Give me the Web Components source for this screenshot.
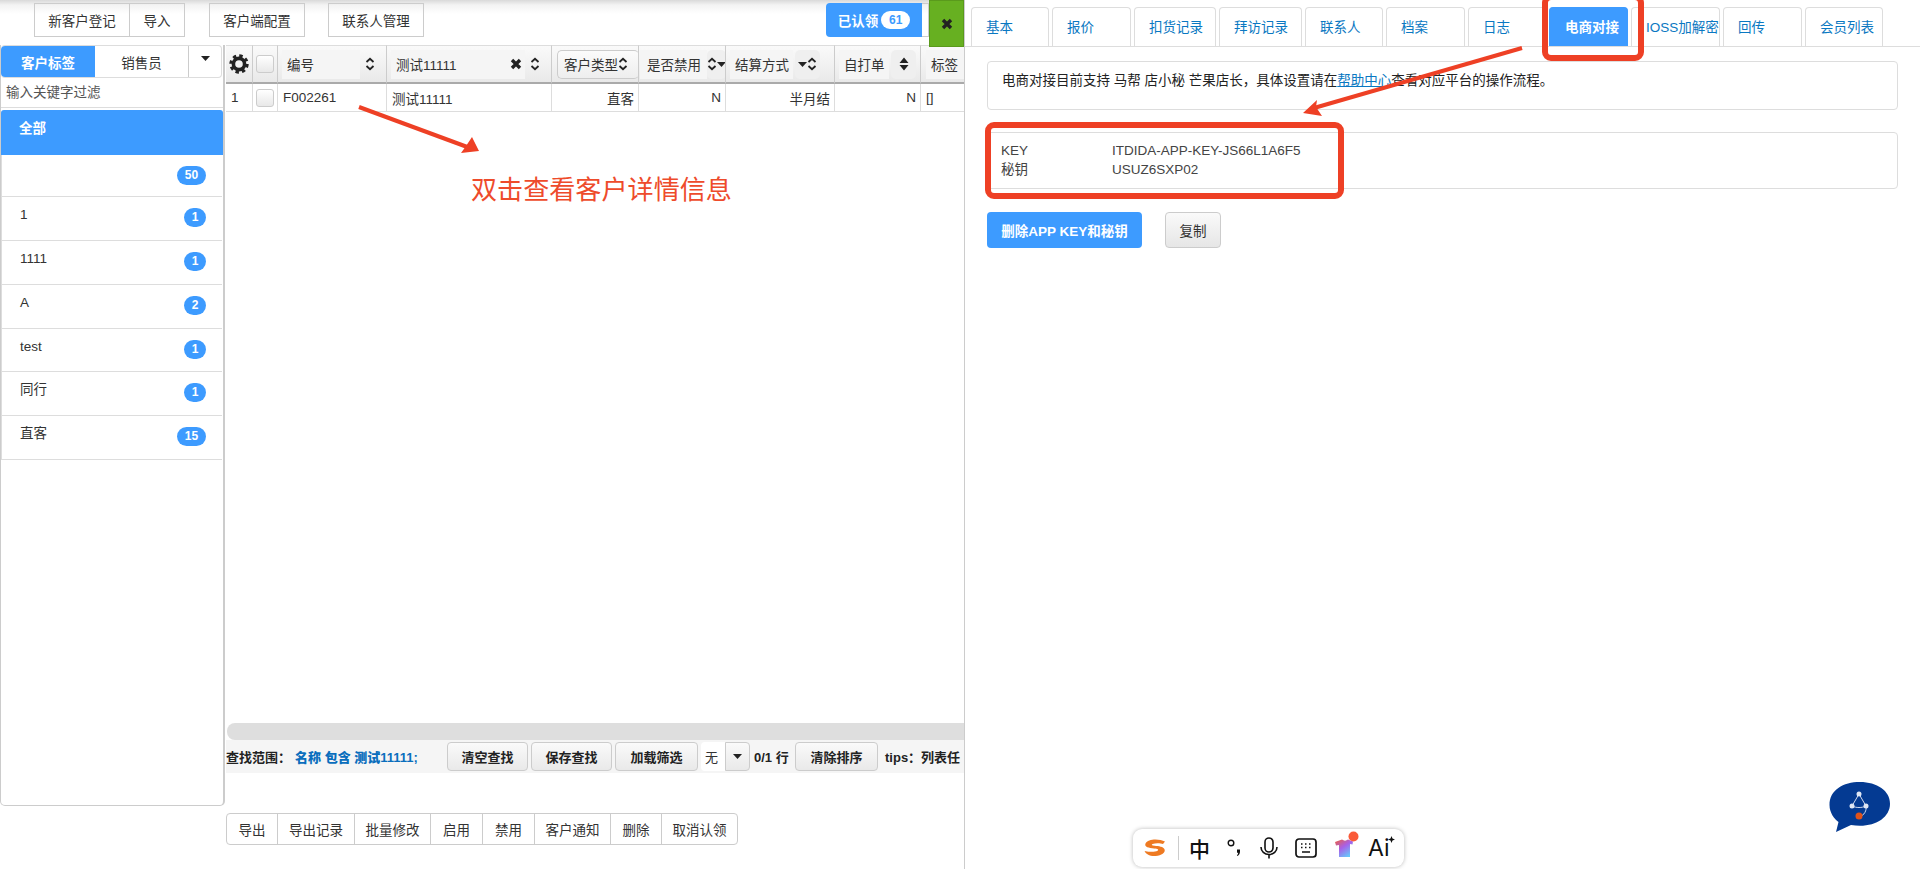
<!DOCTYPE html>
<html lang="zh-CN">
<head>
<meta charset="utf-8">
<title>客户管理</title>
<style>
  html, body { margin: 0; height: 869px; overflow: hidden; background: #fff; }
  body { font: 13.5px "Liberation Sans", "Noto Sans CJK SC", sans-serif; color: #333; }
</style>
</head>
<body>
<customer-page>
  <left-pane slot="left">
    <top-toolbar slot="top"></top-toolbar>
    <tag-sidebar slot="side"></tag-sidebar>
    <customer-grid slot="grid"></customer-grid>
    <grid-status slot="grid"></grid-status>
    <action-bar slot="grid"></action-bar>
  </left-pane>
  <detail-pane slot="right"></detail-pane>
</customer-page>
<note-layer></note-layer>
<ime-bar></ime-bar>
<chat-bubble></chat-bubble>

<script>
(function () {
  const sortIcon = `<svg width="10" height="14" viewBox="0 0 10 14"><path d="M1.5 5 5 1.8 8.5 5M1.5 9 5 12.2 8.5 9" fill="none" stroke="#222" stroke-width="1.8"/></svg>`;
  const sortSolid = `<svg width="10" height="14" viewBox="0 0 10 14"><path d="M5 .5 9.5 6h-9zM.5 8h9L5 13.5z" fill="#222"/></svg>`;
  const caret = `<svg width="9" height="5" viewBox="0 0 9 5"><path d="M0 0h9L4.5 5z" fill="#222"/></svg>`;
  const cross = `<svg width="12" height="12" viewBox="0 0 12 12"><path d="M2 2 10 10M10 2 2 10" stroke="#222" stroke-width="3.4"/></svg>`;

  function define(name, css, html) {
    customElements.define(name, class extends HTMLElement {
      constructor() {
        super();
        this.attachShadow({ mode: "open" }).innerHTML = `<style>${css}</style>${html}`;
      }
    });
  }

  define("customer-page", `
    :host { display: flex; height: 869px; }
  `, `<slot name="left"></slot><slot name="right"></slot>`);

  define("left-pane", `
    :host { display: grid; grid-template-columns: 226px 738px; grid-template-rows: 45px 1fr;
      width: 964px; flex: none; height: 869px; border-right: 1px solid #ccc; }
    .top { grid-column: 1 / 3; display: block; }
    .grid { display: flex; flex-direction: column; min-width: 0; }
  `, `<div class="top"><slot name="top"></slot></div><slot name="side"></slot><div class="grid"><slot name="grid"></slot></div>`);

  define("top-toolbar", `
    :host { display: flex; height: 45px; position: relative; box-sizing: border-box; padding: 3px 0 0 34px;
      background: linear-gradient(#d9d9d9, #f3f3f3 5px, #fff 14px); }
    .b { box-sizing: border-box; height: 34px; border: 1px solid #ccc; display: flex; align-items: center; justify-content: center; color: #333; }
    .w1 { width: 96px; } .w2 { width: 56px; margin-left: -1px; }
    .gap { margin-left: 24px; }
    .gap2 { margin-left: 23px; }
    .claimed { margin-left: 402px; width: 96px; height: 34px; box-sizing: border-box; background: #3d9bff; color: #fff; font-weight: bold;
      border-radius: 4px 0 0 4px; display: flex; align-items: center; justify-content: center; gap: 3px; }
    .claimed i { font-style: normal; background: #fff; color: #3d9bff; border-radius: 10px; width: 29px; height: 18px; line-height: 18px; text-align: center; font-size: 12px; }
    .stub { width: 7px; height: 34px; box-sizing: border-box; border: 1px solid #ccc; border-left: 0; }
    .close { width: 35px; height: 47px; margin-top: -3px; box-sizing: border-box; background: #67b021; border: 1px solid #5a9a1c; display: flex; align-items: center; justify-content: center; z-index: 1; }
  `, `<div class="b w1">新客户登记</div><div class="b w2">导入</div>
      <div class="b w1 gap">客户端配置</div><div class="b w1 gap2">联系人管理</div>
      <div class="claimed">已认领<i>61</i></div><div class="stub"></div>
      <div class="close">${cross}</div>`);

  const tags = [["", 50, 42], ["1", 1, 44], ["1111", 1, 44], ["A", 2, 44], ["test", 1, 43], ["同行", 1, 44], ["直客", 15, 44]];
  define("tag-sidebar", `
    :host { display: block; width: 225px; height: 761px; box-sizing: border-box; border: 1px solid #ccc; border-width: 0 2px 1px 1px; border-radius: 0 0 5px 5px; }
    .tabs { display: grid; grid-template-columns: 94px 94px 32px; height: 33px; box-sizing: border-box; border: 1px solid #ddd; border-left: 0; border-radius: 4px; width: 221px; }
    .tabs div { display: flex; align-items: center; justify-content: center; }
    .tabs .on { background: #3d9bff; color: #fff; font-weight: bold; border-radius: 4px 0 0 4px; }
    .tabs .mid { border-right: 1px solid #ccc; }
    .tabs .cr { padding-bottom: 6px; }
    .filter { height: 29px; line-height: 27px; padding-left: 5px; color: #555; border-bottom: 1px solid #ddd; box-sizing: border-box; margin-top: 1px; }
    .all { height: 45px; margin-top: 2px; background: #3d9bff; color: #fff; font-weight: bold; padding: 7px 0 0 18px; box-sizing: border-box; border-radius: 3px 3px 0 0; }
    .tag { display: flex; justify-content: space-between; box-sizing: border-box; padding: 8px 16px 0 18px; line-height: 19px; border-bottom: 1px solid #ddd; border-left: 1px solid #ddd; margin-right: 1px; color: #333; }
    .tag i { font: bold 12px "Liberation Sans", sans-serif; background: #3d9bff; color: #fff; border-radius: 10px; height: 19px; line-height: 19px; min-width: 22px; text-align: center; margin-top: 3px; }
    .tag i.w { min-width: 29px; }
  `, `<div class="tabs"><div class="on">客户标签</div><div class="mid">销售员</div><div class="cr">${caret}</div></div>
      <div class="filter">输入关键字过滤</div>
      <div class="all">全部</div>
      ${tags.map(t => `<div class="tag" style="height:${t[2]}px"><span>${t[0]}</span><i class="${t[1] > 9 ? "w" : ""}">${t[1]}</i></div>`).join("")}`);

  define("customer-grid", `
    :host { display: block; height: 678px; width: 738px; overflow: hidden; }
    .t { display: grid; grid-template-columns: 27px 25px 109px 165px 87px 87px 109px 86px 43px; }
    .h { height: 39px; box-sizing: border-box; background: linear-gradient(#fafafa, #e9e9e9); border-top: 1px solid #ddd; border-right: 1px solid #ccc; border-bottom: 2px solid #aaa;
      display: flex; align-items: center; white-space: nowrap; overflow: hidden; color: #333; }
    .lb { background: #f5f5f5; height: 29px; display: flex; align-items: center; box-sizing: border-box; padding-left: 5px; flex: none; justify-content: space-between; }
    .bt { height: 29px; box-sizing: border-box; background: #efefef; border-radius: 5px; display: flex; align-items: center; justify-content: center; flex: none; }
    .h svg { flex: none; }
    .c { height: 28px; box-sizing: border-box; border-right: 1px solid #ddd; border-bottom: 1px solid #ddd; display: flex; align-items: center; padding: 0 4px 0 5px; white-space: nowrap; }
    .n { justify-content: flex-end; }
    .ck { width: 18px; height: 18px; box-sizing: border-box; border: 1px solid #ccc; border-radius: 3px; background: linear-gradient(#fff, #e8e8e8); display: block; }
    .mid { justify-content: center; padding: 0; }
  `, `<div class="t">
      <div class="h mid"><svg width="20" height="20" viewBox="0 0 20 20"><circle cx="10" cy="10" r="5.6" fill="none" stroke="#222" stroke-width="3.6"/><circle cx="10" cy="10" r="8.2" fill="none" stroke="#222" stroke-width="3" stroke-dasharray="3.4 3.04"/></svg></div>
      <div class="h mid"><span class="ck"></span></div>
      <div class="h" style="padding-left:4px"><span class="lb" style="width:78px">编号</span><span style="margin-left:5px;display:flex">${sortIcon}</span></div>
      <div class="h" style="padding-left:4px"><span class="lb" style="width:134px"><span>测试11111</span><span style="display:flex;padding-right:3px">${cross}</span></span><span style="margin-left:5px;display:flex">${sortIcon}</span></div>
      <div class="h" style="padding-left:5px"><span class="bt" style="width:82px;border:1px solid #ccc;border-right:0;justify-content:flex-start;padding-left:6px;background:linear-gradient(#fbfbfb,#eee)">客户类型${sortIcon}</span></div>
      <div class="h" style="padding-left:1px"><span class="lb" style="width:67px;padding-left:7px">是否禁用</span><span class="bt" style="width:19px;justify-content:flex-start">${sortIcon}${caret}</span></div>
      <div class="h" style="padding-left:4px"><span class="lb" style="width:63px">结算方式</span><span class="bt" style="width:25px;margin-left:2px">${caret}${sortIcon}</span></div>
      <div class="h" style="padding-left:4px"><span class="lb" style="width:50px">自打单</span><span class="bt" style="width:25px;margin-left:2px">${sortSolid}</span></div>
      <div class="h" style="padding-left:5px;border-right:0"><span class="lb" style="width:38px">标签</span></div>

      <div class="c">1</div>
      <div class="c mid"><span class="ck"></span></div>
      <div class="c">F002261</div>
      <div class="c">测试11111</div>
      <div class="c n">直客</div>
      <div class="c n">N</div>
      <div class="c n">半月结</div>
      <div class="c n">N</div>
      <div class="c" style="border-right:0">[]</div>
    </div>`);

  define("grid-status", `
    :host { display: block; width: 738px; }
    .sb { height: 17px; background: #dedede; border-radius: 8px 0 0 8px; margin-left: 1px; }
    .bar { height: 33px; background: #f5f5f5; display: flex; align-items: center; white-space: nowrap; color: #222; font-weight: bold; font-size: 13px; }
    .scope b { color: #0a6ebd; margin-left: 4px; }
    .scope { width: 221px; flex: none; }
    .btn { box-sizing: border-box; width: 81px; height: 29px; flex: none; margin-right: 3px; background: linear-gradient(#fafafa, #e9e9e9); border: 1px solid #ccc; border-radius: 4px; display: flex; align-items: center; justify-content: center; }
    .btn.wide { width: 83px; }
    .sel { width: 49px; height: 29px; flex: none; display: flex; box-sizing: border-box; font-weight: normal; }
    .sel span { width: 24px; display: flex; align-items: center; padding-left: 4px; box-sizing: border-box; background: #fff; border-radius: 4px 0 0 4px; color: #333; }
    .sel i { width: 25px; background: linear-gradient(#fafafa, #e9e9e9); border: 1px solid #ccc; box-sizing: border-box; border-radius: 0 4px 4px 0; display: flex; align-items: center; justify-content: center; }
    .pg { width: 41px; margin-left: 4px; flex: none; }
  `, `<div class="sb"></div>
    <div class="bar"><span class="scope">查找范围：<b>名称 包含 测试11111;</b></span>
      <span class="btn">清空查找</span><span class="btn">保存查找</span><span class="btn wide">加载筛选</span>
      <span class="sel"><span>无</span><i>${caret}</i></span>
      <span class="pg">0/1 行</span><span class="btn wide">清除排序</span><span style="margin-left:4px">tips：列表任</span></div>`);

  define("action-bar", `
    :host { display: flex; width: 512px; height: 32px; margin-top: 40px; box-sizing: border-box; border: 1px solid #ccc; border-radius: 4px; }
    div { display: flex; align-items: center; justify-content: center; box-sizing: border-box; border-right: 1px solid #ccc; color: #333; }
    div:last-child { border-right: 0; }
  `, [["导出", 51], ["导出记录", 77], ["批量修改", 76], ["启用", 52], ["禁用", 52], ["客户通知", 76], ["删除", 51], ["取消认领", 75]]
      .map(b => `<div style="width:${b[1]}px">${b[0]}</div>`).join(""));

  const tabs = [["基本", 78], ["报价", 79], ["扣货记录", 82], ["拜访记录", 83], ["联系人", 78], ["档案", 79], ["日志", 78], ["电商对接", 79, 1], ["IOSS加解密", 89], ["回传", 79], ["会员列表", 78]];
  define("detail-pane", `
    :host { display: block; width: 955px; flex: none; color: #333; }
    .tabs { display: flex; gap: 3px; height: 47px; box-sizing: border-box; padding: 7px 0 0 6px; border-bottom: 1px solid #ddd; }
    .tab { height: 39px; box-sizing: border-box; border: 1px solid #ddd; border-bottom: 0; border-radius: 4px 4px 0 0; padding: 8px 0 0 14px; color: #0a78c2; white-space: nowrap; flex: none; }
    .tab.on { background: #3d9bff; color: #fff; font-weight: bold; border-color: #3d9bff; padding-left: 15px; }
    .tab.ioss { padding-left: 14px; }
    .body { padding: 14px 22px 0 22px; }
    .box { border: 1px solid #ddd; border-radius: 4px; box-sizing: border-box; width: 911px; }
    .alert { height: 49px; padding: 7px 14px 0; color: #222; }
    .alert a { color: #0a78c2; text-decoration: underline; }
    .kv { height: 57px; margin-top: 22px; padding: 8px 13px 0; display: grid; grid-template-columns: 111px 1fr; align-content: start; line-height: 19px; color: #444; }
    .ops { display: flex; margin-top: 23px; }
    .del { width: 155px; height: 36px; background: #3d9bff; color: #fff; font-weight: bold; border-radius: 4px; display: flex; align-items: center; justify-content: center; }
    .copy { width: 56px; height: 36px; margin-left: 23px; box-sizing: border-box; border: 1px solid #ccc; border-radius: 4px; background: linear-gradient(#fafafa, #e6e6e6); display: flex; align-items: center; justify-content: center; }
  `, `<div class="tabs">${tabs.map(t => `<div class="tab ${t[2] ? "on" : ""} ${t[1] === 89 ? "ioss" : ""}" style="width:${t[1]}px">${t[0]}</div>`).join("")}</div>
    <div class="body">
      <div class="box alert">电商对接目前支持 马帮 店小秘 芒果店长，具体设置请在<a>帮助中心</a>查看对应平台的操作流程。</div>
      <div class="box kv"><span>KEY</span><span>ITDIDA-APP-KEY-JS66L1A6F5</span><span>秘钥</span><span>USUZ6SXP02</span></div>
      <div class="ops"><div class="del">删除APP KEY和秘钥</div><div class="copy">复制</div></div>
    </div>`);

  // red marks drawn over the screenshot
  define("note-layer", `
    :host { position: absolute; left: 0; top: 0; width: 1920px; height: 869px; pointer-events: none; }
    svg { position: absolute; left: 0; top: 0; }
    .rect { position: absolute; box-sizing: border-box; border: 6px solid #ee4025; border-radius: 9px; }
    .txt { position: absolute; left: 471px; top: 172px; font-size: 26.1px; line-height: 32px; color: #ee4b2b; white-space: nowrap; font-family: "Noto Sans CJK SC", sans-serif; }
  `, `<svg width="1920" height="869" viewBox="0 0 1920 869">
      <path d="M359 107 470 148" stroke="#ee4025" stroke-width="4"/>
      <path d="M479 151 461 153 466 146 472 137z" fill="#ee4025"/>
      <path d="M1522 48 1314 108" stroke="#ee4025" stroke-width="4"/>
      <path d="M1303 113 1317 100 1316 107 1322 116z" fill="#ee4025"/>
    </svg>
    <div class="rect" style="left:1542px;top:-6px;width:102px;height:67px"></div>
    <div class="rect" style="left:985px;top:122px;width:359px;height:77px"></div>
    <div class="txt">双击查看客户详情信息</div>`);

  define("ime-bar", `
    :host { position: absolute; left: 1133px; top: 829px; width: 271px; height: 38px; box-sizing: border-box; background: #fff; border-radius: 9px; box-shadow: 0 0 4px rgba(0,0,0,.28);
      display: flex; align-items: center; padding-left: 10px; }
    svg { display: block; flex: none; }
    .zh { font: 500 21px "Noto Sans CJK SC", sans-serif; color: #111; width: 20px; margin-left: 10px; line-height: 24px; }
    .ai { font: 23px "Inter", "Liberation Sans", sans-serif; color: #111; margin-left: 8px; line-height: 24px; position: relative; }
    .ai svg { position: absolute; right: -5px; top: 0; }
    .sep { width: 1px; height: 24px; background: #ccc; margin-left: 11px; }
  `, `<svg width="24" height="20" viewBox="0 0 24 20"><path d="M22 3.5C16 .5 5 .6 2.5 5.500 1 9 6 10 11 10.500c4 .4 5 1.200 3.600 2.200-3 1.500-8 1.300-13 .2 1 3 5 5.300 11 5 6-.4 10-3.300 9-6.500-1-2.800-6-3.200-10-3.600-3-.3-3.500-1-2-1.700C13 4.700 18 5.400 20 6z" fill="#ee7a22"/></svg>
    <span class="sep"></span><span class="zh">中</span>
    <svg style="margin-left:18px" width="14" height="20" viewBox="0 0 14 20"><circle cx="4" cy="5" r="2.8" fill="none" stroke="#111" stroke-width="1.4"/><path d="M10 11.500h3v2c0 2-1 3.500-2.500 4.500l-.6-.8c.8-.7 1.200-1.400 1.300-2.500H10z" fill="#111"/></svg>
    <svg style="margin-left:18px" width="20" height="22" viewBox="0 0 20 22"><rect x="6" y="1" width="8" height="14" rx="4" fill="none" stroke="#111" stroke-width="1.6"/><path d="M2 10c0 4.500 3.500 7.500 8 7.500s8-3 8-7.500M10 17.500V21.500" fill="none" stroke="#111" stroke-width="1.6"/></svg>
    <svg style="margin-left:16px" width="22" height="20" viewBox="0 0 22 20"><rect x="1" y="1" width="20" height="18" rx="3" fill="none" stroke="#111" stroke-width="1.7"/><path d="M6 6h1.500M10 6h1.500M14 6h1.500M6 9.500h1.500M10 9.500h1.500M14 9.500h1.500M7 14h8" stroke="#111" stroke-width="1.5"/></svg>
    <svg style="margin-left:17px;margin-top:-6px" width="26" height="28" viewBox="0 0 26 28"><defs><linearGradient id="sh" x1="0" y1="0" x2="0.7" y2="1"><stop offset="0" stop-color="#ee5f3a"/><stop offset=".5" stop-color="#a860e8"/><stop offset="1" stop-color="#66c8fb"/></linearGradient></defs><path d="M1 11 8 8.500c2 1.500 4 1.500 6 0l5 2-.5 3-2.500-.5V26H5V14l-3 .5z" fill="url(#sh)"/><circle cx="19.5" cy="5.5" r="5" fill="#fa5a38"/></svg>
    <span class="ai">Ai<svg width="7" height="7" viewBox="0 0 7 7"><path d="M3.500 0 4.500 2.500 7 3.500 4.500 4.500 3.500 7 2.500 4.500 0 3.500 2.500 2.500z" fill="#111"/></svg></span>`);

  define("chat-bubble", `
    :host { position: absolute; left: 1829px; top: 782px; width: 62px; height: 52px; }
    svg { display: block; }
  `, `<svg width="62" height="52" viewBox="0 0 62 52">
      <path d="M31 0C14 0 .5 8 .5 23c0 8 5 14 9 17L7 50l15-7c3 .5 6 .7 9 .7 17 0 30-9 30-22S48 0 31 0z" fill="#043a92"/>
      <path d="M30 12 37 24c1 4-2 10-6 10M30 12 23 24c4 2 10 2 14 0" fill="none" stroke="#cfd8ee" stroke-width="1"/>
      <circle cx="30" cy="12" r="2.5" fill="#dfe6f4"/><circle cx="23" cy="24" r="2.5" fill="#dfe6f4"/><circle cx="37" cy="24" r="2.5" fill="#dfe6f4"/>
      <circle cx="30" cy="34" r="3.5" fill="#e0521a"/>
    </svg>`);
})();
</script>
</body>
</html>
